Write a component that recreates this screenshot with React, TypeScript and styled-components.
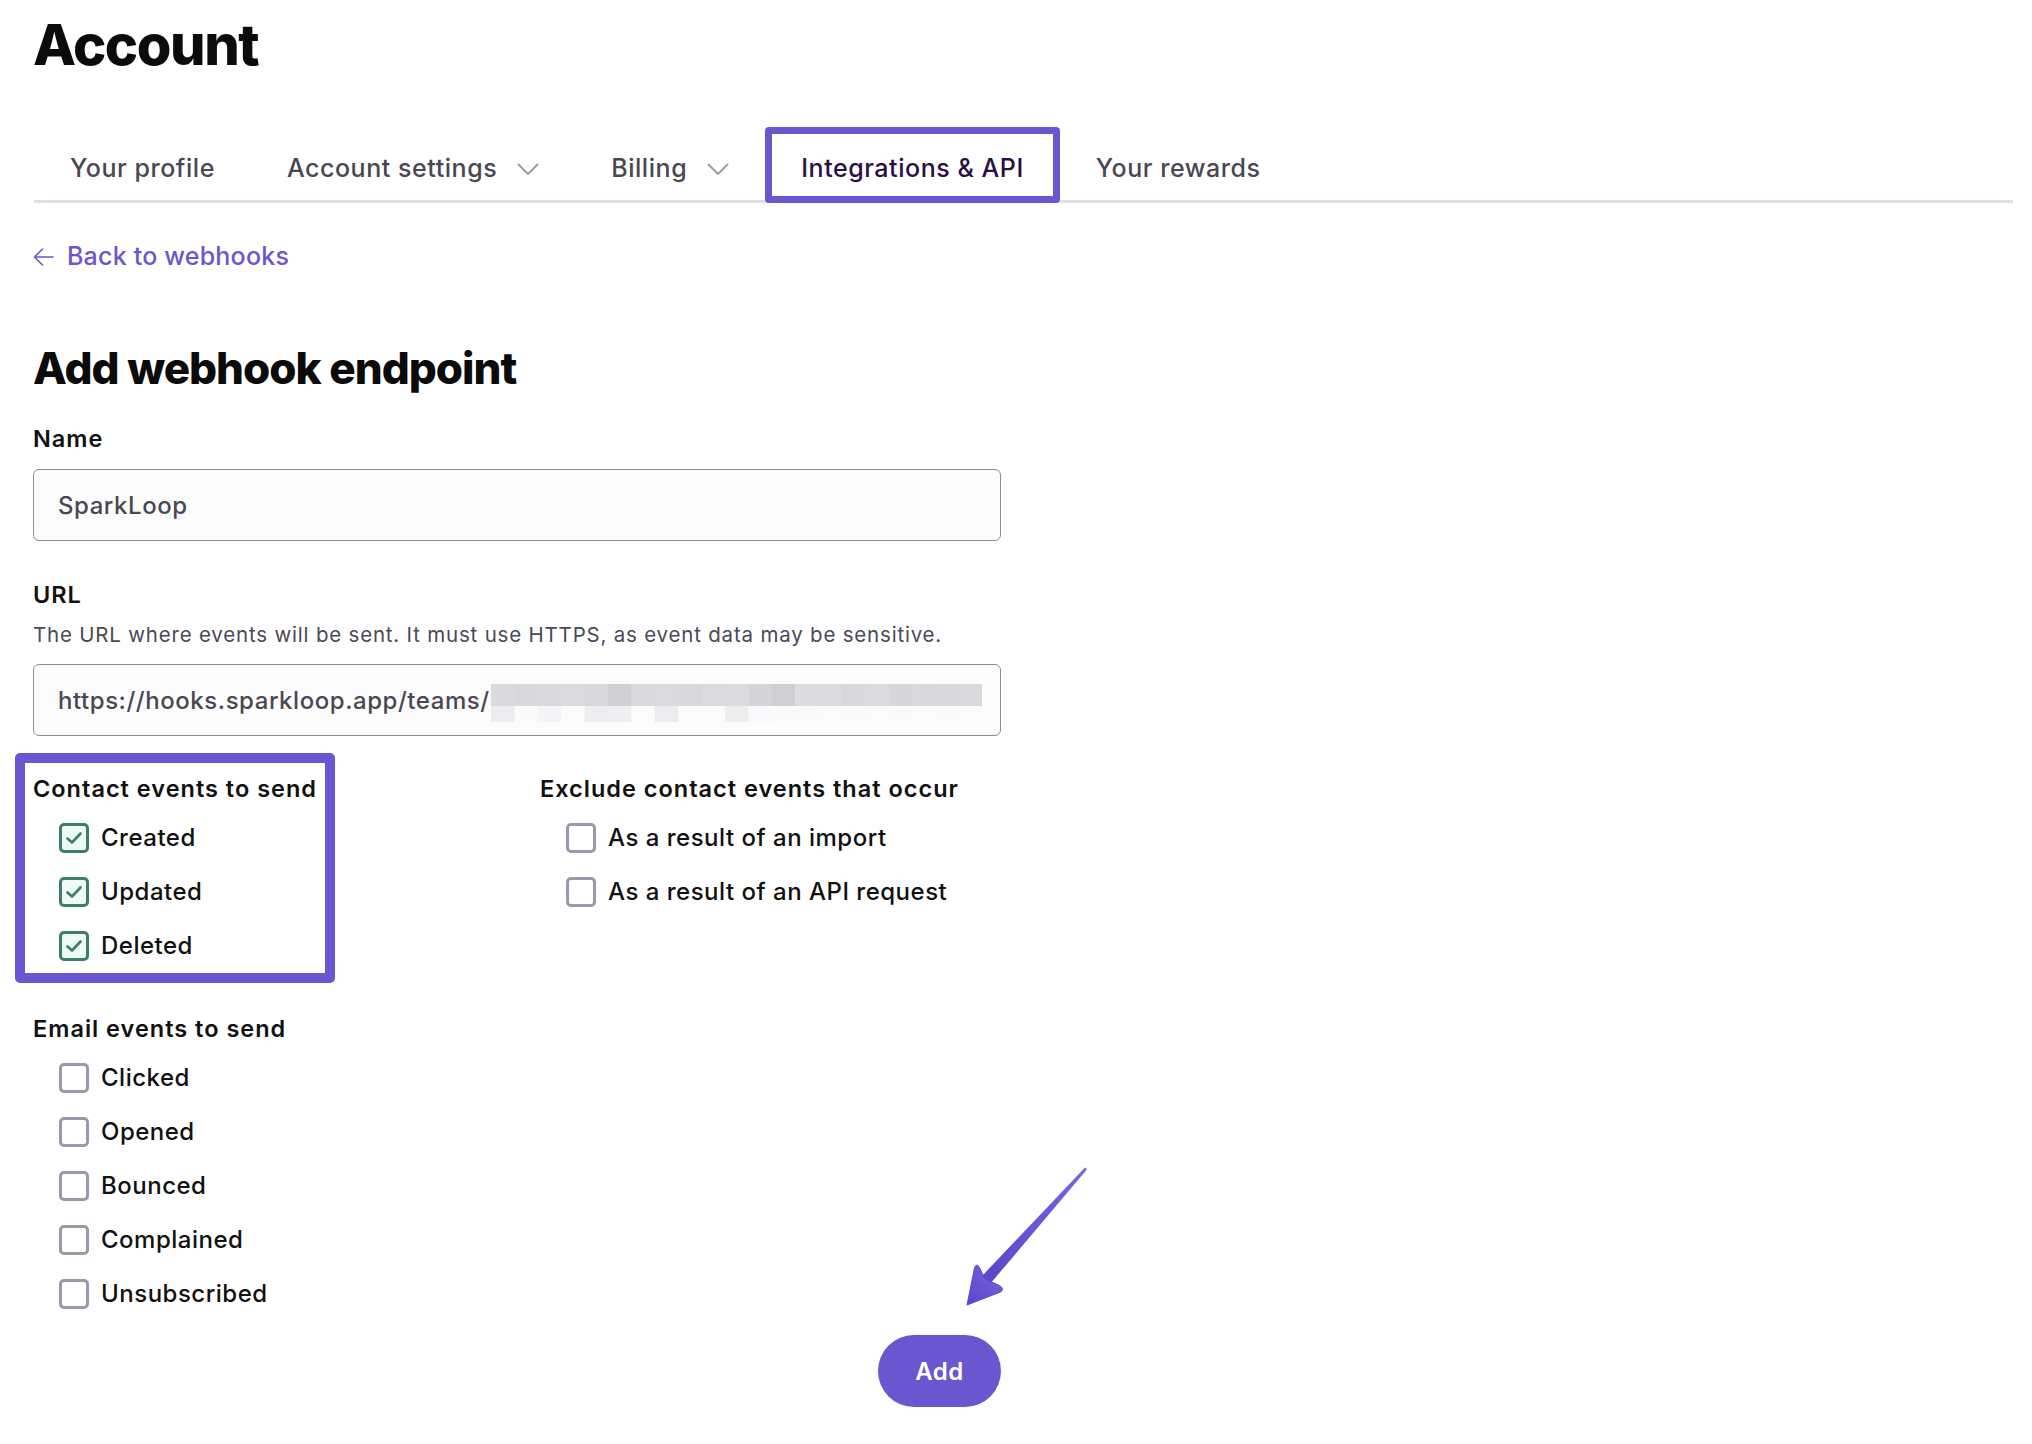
import React from "react";
import styled, { createGlobalStyle } from "styled-components";

const GlobalStyle = createGlobalStyle`
  html, body { margin: 0; padding: 0; background: #ffffff; }
  body {
    font-family: Inter, "Noto Sans", sans-serif;
    color: #111111;
    -webkit-font-smoothing: antialiased;
  }
  * { box-sizing: border-box; }
`;

const Page = styled.div`
  position: relative;
  padding: 17px 19px 36px 33px;
  min-height: 1444px;
`;

const Title = styled.h1`
  margin: 0;
  font-family: Inter, sans-serif;
  font-weight: 800;
  font-size: 56px;
  line-height: 56px;
  letter-spacing: -1.4px;
  color: #0b0b0b;
`;

const Tabs = styled.nav`
  display: flex;
  margin-top: 54px;
  margin-left: 1px;
  border-bottom: 3px solid #e1deeb;
`;

const Tab = styled.div<{ $active?: boolean }>`
  position: relative;
  display: flex;
  align-items: center;
  gap: 20px;
  padding: 28px 36px 19px;
  font-size: 25px;
  line-height: 26px;
  font-weight: 500;
  letter-spacing: 0.55px;
  color: ${(p) => (p.$active ? "#2a0e46" : "#4a4753")};
`;

const TabHighlight = styled.span`
  position: absolute;
  left: 0;
  right: 0;
  top: 0;
  bottom: -3px;
  border: 7px solid #6b55d0;
  border-radius: 4px;
  pointer-events: none;
`;

const Chevron = styled.svg`
  width: 22px;
  height: 13px;
  flex: none;
  margin-top: 2px;
`;

const BackRow = styled.div`
  display: flex;
`;

const BackLink = styled.a`
  display: inline-flex;
  align-items: center;
  gap: 13px;
  margin-top: 41px;
  font-size: 25px;
  line-height: 25px;
  font-weight: 500;
  letter-spacing: 0.2px;
  color: #6a56d1;
  text-decoration: none;
`;

const SectionTitle = styled.h2`
  margin: 77px 0 0;
  font-family: Inter, sans-serif;
  font-weight: 800;
  font-size: 44px;
  line-height: 44px;
  letter-spacing: -1px;
  color: #0b0b0b;
`;

const Form = styled.form`
  width: 968px;
  display: flex;
  flex-direction: column;
`;

const FieldLabel = styled.label<{ $gap: number }>`
  display: block;
  margin-top: ${(p) => p.$gap}px;
  font-size: 23.5px;
  line-height: 22px;
  font-weight: 600;
  letter-spacing: 1px;
  color: #111111;
`;

const Hint = styled.p`
  margin: 19px 0 0;
  font-size: 20.5px;
  line-height: 20px;
  font-weight: 400;
  letter-spacing: 0.8px;
  color: #4b4857;
`;

const InputBox = styled.div`
  margin-top: 19px;
  height: 72px;
  border: 1.5px solid #8f8b9c;
  border-radius: 6px;
  background: #fcfcfc;
  display: flex;
  align-items: center;
  padding: 0 18px 0 24px;
  font-size: 24px;
  font-weight: 500;
  letter-spacing: 0.55px;
  color: #4a4753;
  overflow: hidden;
  white-space: nowrap;
`;

const Mosaic = styled.svg`
  flex: 1;
  min-width: 0;
  height: 38px;
  margin-left: 1px;
  margin-top: 6px;
`;

const EventsGrid = styled.div`
  display: grid;
  grid-template-columns: 507px 1fr;
  margin-top: 42px;
`;

const Group = styled.div<{ $gap?: number }>`
  position: relative;
  margin-top: ${(p) => p.$gap ?? 0}px;
`;

const GroupHighlight = styled.span`
  position: absolute;
  left: -18px;
  top: -25px;
  bottom: -22px;
  width: 320px;
  border: 10px solid #6b55d0;
  border-radius: 5px;
  pointer-events: none;
`;

const GroupTitle = styled.div`
  font-size: 23.5px;
  line-height: 22px;
  font-weight: 600;
  letter-spacing: 1px;
  color: #111111;
  white-space: nowrap;
`;

const OptionList = styled.div`
  display: flex;
  flex-direction: column;
  gap: 24px;
  margin-top: 23px;
  padding-left: 26px;
`;

const Option = styled.label`
  display: flex;
  align-items: center;
  gap: 12px;
  height: 30px;
  font-size: 24px;
  line-height: 24px;
  font-weight: 500;
  letter-spacing: 0.5px;
  color: #111111;
  white-space: nowrap;
`;

const Box = styled.span<{ $checked?: boolean }>`
  flex: none;
  width: 30px;
  height: 30px;
  border-radius: 5px;
  border: 3px solid ${(p) => (p.$checked ? "#3b7e6d" : "#9c98a9")};
  background: ${(p) => (p.$checked ? "#eefaf4" : "#ffffff")};
  display: flex;
  align-items: center;
  justify-content: center;
`;

const ButtonRow = styled.div`
  display: flex;
  justify-content: flex-end;
  margin-top: 26px;
`;

const AddButton = styled.button`
  width: 123px;
  height: 72px;
  border: none;
  border-radius: 36px;
  background: #6a56cf;
  color: #ffffff;
  font-family: Inter, sans-serif;
  font-size: 24px;
  font-weight: 600;
  letter-spacing: 0.5px;
  cursor: pointer;
`;

const Pointer = styled.svg`
  position: absolute;
  left: 960px;
  top: 1160px;
  width: 132px;
  height: 152px;
  pointer-events: none;
`;

const ChevronDown = () => (
  <Chevron viewBox="0 0 22 13" fill="none">
    <polyline points="1.5,1.5 11,11 20.5,1.5" stroke="#a09cab" strokeWidth="2" strokeLinecap="round" strokeLinejoin="round" />
  </Chevron>
);

const BackArrow = () => (
  <svg width="21" height="18" viewBox="0 0 21 18" fill="none">
    <path d="M20 9H1.5M9.5 1L1.5 9l8 8" stroke="#6a56d1" strokeWidth="1.6" strokeLinecap="round" strokeLinejoin="round" />
  </svg>
);

const Check = () => (
  <svg width="18" height="14" viewBox="0 0 18 14" fill="none">
    <path d="M2.5 7.5l4.5 4 8.5-9" stroke="#3b7e6d" strokeWidth="2.6" strokeLinecap="round" strokeLinejoin="round" />
  </svg>
);

const Checkbox = ({ checked, label }: { checked?: boolean; label: string }) => (
  <Option>
    <Box $checked={checked}>{checked && <Check />}</Box>
    {label}
  </Option>
);

const topCells = [
  "#dadadd", "#d8d8db", "#dadadd", "#dbdbde", "#d8d7db", "#d0cfd4", "#dadade",
  "#dbdbde", "#d8d7dc", "#dbdbde", "#dcdcde", "#d5d4d9", "#d0cfd4", "#dcdcde",
  "#dcdcdf", "#d8d8db", "#dcdcde", "#d7d7da", "#d9d9dc", "#d8d8db", "#dadadd",
];
const bottomCells = [
  "#ececee", "#fafafa", "#f4f4f6", "#fbfbfb", "#ededf0", "#efeff1", "#fbfbfb",
  "#ececee", "#fbfbfb", "#fbfbfb", "#ededee", "#f9f9fb", "#fafafa", "#fafafa",
  "#fbfbfb", "#fafafa", "#fbfbfb", "#fafafa", "#fbfbfb", "#fafafa", "#fbfbfb",
];

const BlurredId = () => (
  <Mosaic viewBox="0 0 504 38" preserveAspectRatio="none">
    {topCells.map((c, i) => (
      <rect key={`t${i}`} x={i * 24} y={0} width={24.5} height={22} fill={c} />
    ))}
    {bottomCells.map((c, i) => (
      <rect key={`b${i}`} x={i * 24} y={22} width={24.5} height={16} fill={c} />
    ))}
  </Mosaic>
);

export default function App() {
  return (
    <>
      <GlobalStyle />
      <Page>
        <Title>Account</Title>
        <Tabs>
          <Tab>Your profile</Tab>
          <Tab>
            Account settings
            <ChevronDown />
          </Tab>
          <Tab>
            Billing
            <ChevronDown />
          </Tab>
          <Tab $active>
            Integrations &amp; API
            <TabHighlight />
          </Tab>
          <Tab>Your rewards</Tab>
        </Tabs>

        <BackRow>
          <BackLink href="#">
            <BackArrow />
            Back to webhooks
          </BackLink>
        </BackRow>

        <SectionTitle>Add webhook endpoint</SectionTitle>

        <Form onSubmit={(e) => e.preventDefault()}>
          <FieldLabel $gap={38}>Name</FieldLabel>
          <InputBox>SparkLoop</InputBox>

          <FieldLabel $gap={43}>URL</FieldLabel>
          <Hint>The URL where events will be sent. It must use HTTPS, as event data may be sensitive.</Hint>
          <InputBox>
            https://hooks.sparkloop.app/teams/
            <BlurredId />
          </InputBox>

          <EventsGrid>
            <Group>
              <GroupHighlight />
              <GroupTitle>Contact events to send</GroupTitle>
              <OptionList>
                <Checkbox checked label="Created" />
                <Checkbox checked label="Updated" />
                <Checkbox checked label="Deleted" />
              </OptionList>
            </Group>
            <Group>
              <GroupTitle>Exclude contact events that occur</GroupTitle>
              <OptionList>
                <Checkbox label="As a result of an import" />
                <Checkbox label="As a result of an API request" />
              </OptionList>
            </Group>
          </EventsGrid>

          <Group $gap={57}>
            <GroupTitle>Email events to send</GroupTitle>
            <OptionList>
              <Checkbox label="Clicked" />
              <Checkbox label="Opened" />
              <Checkbox label="Bounced" />
              <Checkbox label="Complained" />
              <Checkbox label="Unsubscribed" />
            </OptionList>
          </Group>

          <ButtonRow>
            <AddButton type="submit">Add</AddButton>
          </ButtonRow>
        </Form>

        <Pointer viewBox="0 0 132 152">
          <defs>
            <linearGradient id="arrowGrad" x1="1" y1="0" x2="0" y2="1">
              <stop offset="0" stopColor="#7a66e0" />
              <stop offset="1" stopColor="#5a45c8" />
            </linearGradient>
          </defs>
          <path d="M125 7.5 Q127 8 126.5 10 L30 124 L22 116 Z" fill="url(#arrowGrad)" />
          <path
            d="M7 145 L14.5 108 Q16.5 102.5 19.5 107.5 L25 119 L39.5 125.5 Q45 129 40.5 132 Z"
            fill="url(#arrowGrad)"
            stroke="#5e49cb"
            strokeWidth="1"
            strokeLinejoin="round"
          />
        </Pointer>
      </Page>
    </>
  );
}
